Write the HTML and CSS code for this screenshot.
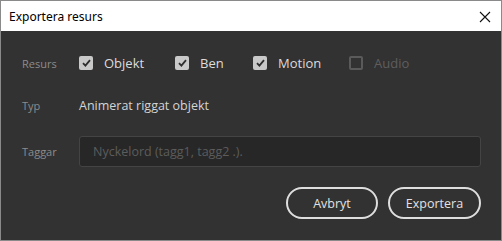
FILE: index.html
```html
<!DOCTYPE html>
<html>
<head>
<meta charset="utf-8">
<link rel="stylesheet" href="styles.css">
</head>
<body>
<div class="window">
  <div class="titlebar">
    <span class="title">Exportera resurs</span>
    <svg class="close" width="12" height="12" viewBox="0 0 12 12"><path d="M1 1L11 11M11 1L1 11" stroke="#111" stroke-width="1.1"/></svg>
  </div>
  <div class="body">
    <div class="row r1">
      <span class="label">Resurs</span>
      <div class="checks">
        <label class="check c1"><span class="box on"><svg width="9" height="8" viewBox="0 0 9 8"><path d="M1 4.2L3.4 6.6L8 1.2" fill="none" stroke="#2e2e2e" stroke-width="1.8"/></svg></span><span class="ct">Objekt</span></label>
        <label class="check c2"><span class="box on"><svg width="9" height="8" viewBox="0 0 9 8"><path d="M1 4.2L3.4 6.6L8 1.2" fill="none" stroke="#2e2e2e" stroke-width="1.8"/></svg></span><span class="ct">Ben</span></label>
        <label class="check c3"><span class="box on"><svg width="9" height="8" viewBox="0 0 9 8"><path d="M1 4.2L3.4 6.6L8 1.2" fill="none" stroke="#2e2e2e" stroke-width="1.8"/></svg></span><span class="ct">Motion</span></label>
        <label class="check c4 off"><span class="box"></span><span class="ct">Audio</span></label>
      </div>
    </div>
    <div class="row r2">
      <span class="label">Typ</span>
      <span class="value">Animerat riggat objekt</span>
    </div>
    <div class="row r3">
      <span class="label">Taggar</span>
      <div class="input">Nyckelord (tagg1, tagg2 .).</div>
    </div>
    <div class="buttons">
      <button class="btn">Avbryt</button>
      <button class="btn">Exportera</button>
    </div>
  </div>
</div>
</body>
</html>
```
FILE: styles.css
```css
html, body { margin: 0; padding: 0; }
body { width: 502px; height: 241px; overflow: hidden; font-family: "Open Sans", "Noto Sans", sans-serif; }
.window {
  width: 502px; height: 241px; box-sizing: border-box;
  border: 1px solid #8a8a8a; display: flex; flex-direction: column;
  background: #323232;
}
.titlebar {
  height: 30px; background: #fff; display: flex; align-items: center;
  justify-content: space-between; padding: 0 10px 0 8px; flex: none;
}
.title { font-family: "Noto Sans", sans-serif; font-size: 12px; color: #000; }
.close { margin-top: 1px; }
.body { flex: 1; position: relative; padding: 0 20px 0 21px; }
.row { display: flex; align-items: center; }
.label { width: 57px; font-size: 11px; color: #8c8c8c; flex: none; }
.r1 { height: 24px; margin-top: 20px; }
.checks { display: flex; align-items: center; }
.check { display: flex; align-items: center; font-size: 13px; color: #dcdcdc; }
.box {
  width: 14px; height: 14px; box-sizing: border-box; border-radius: 2px;
  border: 2px solid #5a5a5a; display: flex; align-items: center; justify-content: center;
}
.box.on { background: #c9c9c9; border: none; }
.ct { margin-left: 11px; }
.c1 { width: 96px; }
.c2 { width: 78px; }
.c3 { width: 96px; }
.off .ct { color: #5e5e5e; }
.r2 { height: 24px; margin-top: 18px; }
.value { font-size: 12.5px; color: #d4d4d4; }
.r3 { margin-top: 19px; }
.input {
  flex: 1; height: 31px; box-sizing: border-box; background: #272727;
  border: 1px solid #444; border-radius: 3px; padding-left: 13px;
  display: flex; align-items: center; font-size: 12.5px; color: #5c5c5c;
}
.buttons { display: flex; justify-content: flex-end; gap: 10px; margin-top: 20px; }
.btn {
  height: 32px; border-radius: 16px; border: 2px solid #dedede; background: transparent;
  color: #e2e2e2; font-family: "Open Sans", sans-serif; font-size: 12.5px; padding: 0;
}
.btn:first-child { width: 92px; }
.btn:last-child { width: 93px; }
```
